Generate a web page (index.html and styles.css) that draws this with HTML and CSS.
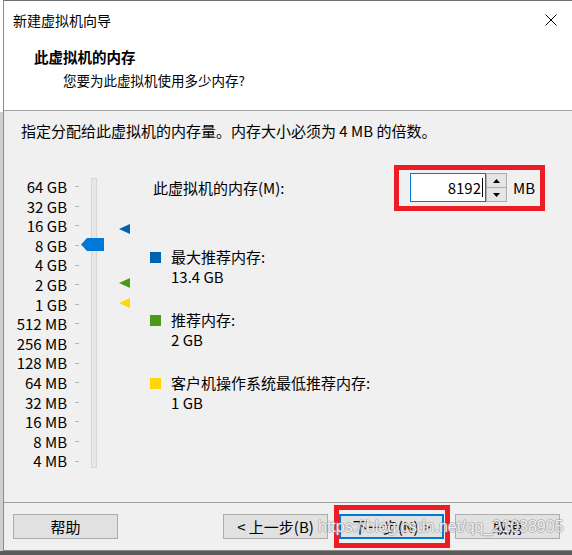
FILE: index.html
```html
<!DOCTYPE html>
<html lang="zh-CN">
<head>
  <meta charset="UTF-8">
  <title>新建虚拟机向导</title>
  <link rel="stylesheet" href="styles.css">
</head>
<body>
  <div class="window">
    <div class="titlebar">
      <span>新建虚拟机向导</span>
      <svg class="close" width="12" height="12" viewBox="0 0 12 12"><path d="M0.5 0.5L11.5 11.5M11.5 0.5L0.5 11.5" stroke="#000" stroke-width="1"/></svg>
    </div>

    <div class="header">
      <div class="h-title">此虚拟机的内存</div>
      <div class="h-sub">您要为此虚拟机使用多少内存?</div>
    </div>

    <div class="main">
      <p class="intro">指定分配给此虚拟机的内存量。内存大小必须为 4 MB 的倍数。</p>
      <div class="content">
        <div class="scale">
          <div class="labels">
            <span>64 GB</span><span>32 GB</span><span>16 GB</span><span>8 GB</span><span>4 GB</span>
            <span>2 GB</span><span>1 GB</span><span>512 MB</span><span>256 MB</span><span>128 MB</span>
            <span>64 MB</span><span>32 MB</span><span>16 MB</span><span>8 MB</span><span>4 MB</span>
          </div>
          <div class="ticks">
            <i></i><i></i><i></i><i></i><i></i><i></i><i></i><i></i><i></i><i></i><i></i><i></i><i></i><i></i><i></i>
          </div>
          <div class="track"></div>
          <div class="thumb"></div>
          <div class="marker max"></div>
          <div class="marker rec"></div>
          <div class="marker min"></div>
        </div>

        <div class="panel">
          <div class="mem-row">
            <label class="mem-label">此虚拟机的内存(M):</label>
            <div class="mem-input">8192<span class="caret"></span></div>
            <div class="spin">
              <div class="spin-btn"><svg width="7" height="4" viewBox="0 0 7 4"><path d="M3.5 0L7 4H0z" fill="#000"/></svg></div>
              <div class="spin-btn"><svg width="7" height="4" viewBox="0 0 7 4"><path d="M0 0H7L3.5 4z" fill="#000"/></svg></div>
            </div>
            <span class="unit">MB</span>
          </div>

          <div class="legend">
            <div class="item">
              <span class="sq blue"></span>
              <div>最大推荐内存:<br>13.4 GB</div>
            </div>
            <div class="item">
              <span class="sq green"></span>
              <div>推荐内存:<br>2 GB</div>
            </div>
            <div class="item">
              <span class="sq yellow"></span>
              <div>客户机操作系统最低推荐内存:<br>1 GB</div>
            </div>
          </div>
        </div>
      </div>
    </div>

    <div class="footer">
      <button class="btn">帮助</button>
      <div class="nav">
        <button class="btn">&lt; 上一步(B)</button>
        <button class="btn focus">下一步(N) &gt;</button>
        <button class="btn">取消</button>
      </div>
    </div>
  </div>

  <!-- annotations drawn over the screenshot -->
  <div class="redbox box-mem"></div>
  <div class="redbox box-next"></div>
  <div class="mark">https://blog.csdn.net/qq_21038905</div>
</body>
</html>
```

FILE: styles.css
```css
* {
  box-sizing: border-box;
}

body {
  margin: 0;
  width: 572px;
  height: 555px;
  overflow: hidden;
  position: relative;
  font-family: "Noto Sans CJK SC", "Noto Sans", sans-serif;
  font-size: 15px;
  color: #000;
  background: linear-gradient(#fff 0 112px, #cfcfcf 112px 551px, #5a5a5a 551px);
}

.window {
  margin-left: 3px;
  width: 569px;
  border-left: 1px solid #8a8a8a;
  border-top: 1px solid #6f6f6f;
  border-bottom: 1px solid #8a8a8a;
  background: #f0f0f0;
}

.titlebar {
  height: 38px;
  background: #fff;
  display: flex;
  align-items: center;
  justify-content: space-between;
  padding: 0 15px 0 9px;
  font-size: 14px;
}

.header {
  height: 72px;
  background: #fff;
  border-bottom: 1px solid #a0a0a0;
  padding-top: 8px;
}

.h-title {
  padding-left: 30px;
  font-size: 14.5px;
  font-weight: bold;
  line-height: 20px;
}

.h-sub {
  padding-left: 59px;
  margin-top: 3px;
  font-size: 13.5px;
  line-height: 20px;
}

.main {
  height: 391px;
  padding-top: 10px;
}

.intro {
  margin: 0;
  padding-left: 17px;
  line-height: 20px;
}

.content {
  display: flex;
  margin-top: 36px;
}

.scale {
  position: relative;
  width: 146px;
  display: flex;
  font-size: 15px;
}

.labels {
  width: 63px;
  display: flex;
  flex-direction: column;
  text-align: right;
}

.labels span {
  height: 19.6px;
  line-height: 19.6px;
}

.ticks {
  width: 4px;
  margin-left: 8px;
  display: flex;
  flex-direction: column;
}

.ticks i {
  height: 19.6px;
  display: flex;
  align-items: center;
}

.ticks i::before {
  content: "";
  width: 4px;
  height: 1px;
  background: #b4b4b4;
}

.track {
  width: 6px;
  height: 290px;
  margin: 1px 0 0 12px;
  background: #e7e7e7;
  border: 1px solid #d6d6d6;
}

.thumb {
  position: absolute;
  left: 77px;
  top: 61px;
  width: 23px;
  height: 13px;
  background: #0078d7;
  clip-path: polygon(0 50%, 6px 0, 100% 0, 100% 100%, 6px 100%);
}

.marker {
  position: absolute;
  left: 115px;
  width: 11px;
  height: 10px;
  clip-path: polygon(0 50%, 100% 0, 100% 100%);
}

.marker.max { top: 47px; background: #0063b1; }
.marker.rec { top: 101px; background: #4a9a16; }
.marker.min { top: 121px; background: #ffd800; }

.panel {
  flex: 1;
}

.mem-row {
  display: flex;
  align-items: center;
  height: 29px;
  margin-top: -4px;
}

.mem-label {
  width: 260px;
  padding-left: 3px;
}

.mem-input {
  width: 76px;
  height: 29px;
  background: #fff;
  border: 1px solid #0078d7;
  display: flex;
  align-items: center;
  justify-content: flex-end;
  padding-right: 2px;
}

.caret {
  width: 1px;
  height: 19px;
  margin-left: 1px;
  background: #000;
}

.spin {
  width: 21px;
  height: 29px;
  display: flex;
  flex-direction: column;
}

.spin-btn {
  flex: 1;
  border: 1px solid #adadad;
  background: #e5e5e5;
  display: flex;
  align-items: center;
  justify-content: center;
}

.spin-btn + .spin-btn {
  border-top: none;
}

.unit {
  margin-left: 6px;
}

.legend {
  margin-top: 45px;
  display: flex;
  flex-direction: column;
  gap: 23px;
}

.item {
  display: flex;
  line-height: 20px;
}

.sq {
  width: 11px;
  height: 11px;
  margin: 5px 10px 0 0;
}

.sq.blue { background: #0063b1; }
.sq.green { background: #4a9a16; }
.sq.yellow { background: #ffd800; }

.footer {
  border-top: 1px solid #a0a0a0;
  padding: 11px 12px 11px 9px;
  display: flex;
  justify-content: space-between;
}

.nav {
  display: flex;
  gap: 11px;
}

.btn {
  width: 105px;
  height: 25px;
  padding: 0;
  font-family: inherit;
  font-size: 15px;
  color: #000;
  background: #e1e1e1;
  border: 1px solid #adadad;
}

.btn.focus {
  border: 2px solid #0078d7;
}

.redbox {
  position: absolute;
  border: 5px solid #ed1c24;
}

.box-mem {
  left: 394px;
  top: 165px;
  width: 151px;
  height: 46px;
}

.box-next {
  left: 334px;
  top: 505px;
  width: 116px;
  height: 43px;
}

.mark {
  position: absolute;
  left: 318px;
  top: 517px;
  font-family: "Liberation Sans", sans-serif;
  font-size: 16px;
  line-height: 20px;
  color: rgba(255, 255, 255, 0.85);
  text-shadow: 1px 0 0 rgba(140, 140, 140, 0.45), -1px 0 0 rgba(140, 140, 140, 0.45),
    0 1px 0 rgba(140, 140, 140, 0.45), 0 -1px 0 rgba(140, 140, 140, 0.45);
}
```
